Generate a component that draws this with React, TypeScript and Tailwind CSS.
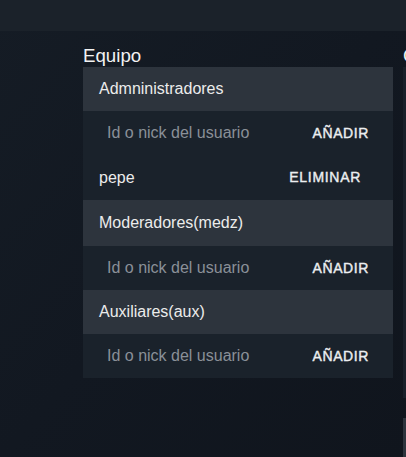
import React from 'react';

type Member = { nick: string };

type Group = {
  title: string;
  members: Member[];
  headerH: string;
};

const groups: Group[] = [
  { title: 'Admninistradores', members: [{ nick: 'pepe' }], headerH: 'h-[44px]' },
  { title: 'Moderadores(medz)', members: [], headerH: 'h-[46px]' },
  { title: 'Auxiliares(aux)', members: [], headerH: 'h-[44px]' },
];

// buttons look medium weight in the reference, between regular and bold
const btn = 'px-2 py-1 text-[14px] text-[#eceef0] [-webkit-text-stroke:0.4px_currentColor]';

const GroupBlock = ({ group }: { group: Group }) => (
  <div>
    {/* Group header */}
    <div className={`${group.headerH} flex items-center px-4 bg-[#2d343d] text-[16px] text-[#ececec]`}>
      {group.title}
    </div>

    {/* Add user row */}
    <div className="h-[44px] flex items-center justify-between bg-[#1a222b] pl-6 pr-4">
      <input
        placeholder="Id o nick del usuario"
        className="bg-transparent outline-none text-[16px] text-[#e0e0e0] placeholder:text-[#8a9098] w-[170px]"
      />
      <button className={`${btn} tracking-[0.6px]`}>AÑADIR</button>
    </div>

    {/* Existing members */}
    {group.members.map((m) => (
      <div key={m.nick} className="h-[45px] flex items-center justify-between bg-[#1a222b] pl-4 pr-6">
        <span className="text-[16px] text-[#ececec]">{m.nick}</span>
        <button className={`${btn} tracking-[0.7px]`}>ELIMINAR</button>
      </div>
    ))}
  </div>
);

export default function App() {
  return (
    <div
      className="w-[406px] h-[457px] overflow-hidden bg-gradient-to-br from-[#151c25] via-[#121821] to-[#10151d]"
      style={{ fontFamily: '"Liberation Sans", Arial, sans-serif' }}
    >
      {/* Top bar */}
      <div className="h-[31px] bg-[#1b222a]" />

      <div className="flex gap-[10px] pl-[83px] pt-[14px]">
        {/* Equipo column */}
        <div className="w-[310px] shrink-0">
          <div className="h-[22px] leading-[22px] text-[18.7px] text-[#f2f2f2]">Equipo</div>
          <div className="bg-[#1a222b]">
            {groups.map((g) => (
              <GroupBlock key={g.title} group={g} />
            ))}
          </div>
        </div>

        {/* Next column, cut off by the window */}
        <div className="w-[310px] shrink-0">
          <div className="h-[22px] leading-[22px] text-[18.7px] text-[#f2f2f2]">Configuración</div>
          <div className="h-[331px] bg-[#19202a]" />
          <div className="mt-[20px] h-[60px] bg-[#2d343d]" />
        </div>
      </div>
    </div>
  );
}
